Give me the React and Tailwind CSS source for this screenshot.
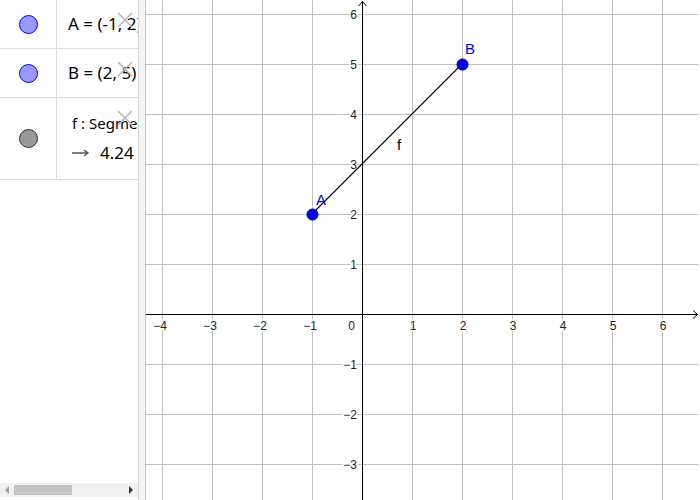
import React from 'react';

const font = { fontFamily: '"Noto Sans", "DejaVu Sans", sans-serif' };

const CloseMark = () => (
  <svg className="absolute right-[5px] top-[12px]" width="16" height="16" viewBox="0 0 16 16">
    <path d="M1 1 L15 15 M15 1 L1 15" stroke="#b8b8b8" strokeWidth="1.6" fill="none" />
  </svg>
);

const Dot = ({ fill, stroke }) => (
  <span className="block h-[19px] w-[19px] rounded-full border" style={{ backgroundColor: fill, borderColor: stroke }} />
);

const AlgebraView = () => (
  <div className="flex h-full w-[139px] flex-col border-r border-[#d4d4d4] bg-white" style={font}>
    <div className="flex h-[49px] border-b border-[#dcdcdc]">
      <div className="flex w-[57px] items-center justify-center border-r border-[#dcdcdc]">
        <Dot fill="#9999ff" stroke="#0000ff" />
      </div>
      <div className="relative flex flex-1 items-center overflow-hidden whitespace-nowrap pl-[11px] text-[17px] text-black">
        A = (-1, 2)
        <CloseMark />
      </div>
    </div>
    <div className="flex h-[49px] border-b border-[#dcdcdc]">
      <div className="flex w-[57px] items-center justify-center border-r border-[#dcdcdc]">
        <Dot fill="#9999ff" stroke="#0000ff" />
      </div>
      <div className="relative flex flex-1 items-center overflow-hidden whitespace-nowrap pl-[11px] text-[17px] text-black">
        B = (2, 5)
        <CloseMark />
      </div>
    </div>
    <div className="flex h-[82px] border-b border-[#dcdcdc]">
      <div className="flex w-[57px] items-center justify-center border-r border-[#dcdcdc]">
        <Dot fill="#999999" stroke="#333333" />
      </div>
      <div className="relative flex flex-1 flex-col justify-center gap-[10px] overflow-hidden whitespace-nowrap pl-[15px] text-black">
        <div className="text-[15px] leading-[18px]">f : Segment(A, B)</div>
        <div className="flex items-center text-[17px] leading-[22px]">
          <svg width="18" height="8" viewBox="0 0 18 8" className="mr-[10px]">
            <path d="M0 4 H15 M12 1 L16 4 L12 7" stroke="#555" strokeWidth="1.4" fill="none" />
          </svg>
          4.24
        </div>
        <CloseMark />
      </div>
    </div>
    <div className="flex-1" />
    <div className="mb-[3px] flex h-[14px] items-center bg-[#f0f0f0]">
      <svg width="14" height="14" viewBox="0 0 14 14">
        <path d="M9 3 L5 7 L9 11 Z" fill="#a0a0a0" />
      </svg>
      <div className="h-[10px] w-[58px] bg-[#c4c4c4]" />
      <div className="flex-1" />
      <svg width="14" height="14" viewBox="0 0 14 14">
        <path d="M5 3 L9 7 L5 11 Z" fill="#333" />
      </svg>
    </div>
  </div>
);

const GraphicsView = () => {
  const ox = 216;
  const oy = 314;
  const s = 50;
  const xs = [-4, -3, -2, -1, 0, 1, 2, 3, 4, 5, 6];
  const ys = [-3, -2, -1, 0, 1, 2, 3, 4, 5, 6];
  const lab = (n) => (n < 0 ? '\u2212' + Math.abs(n) : String(n));
  return (
    <svg width="553" height="500" viewBox="0 0 553 500" className="block" style={{ fontFamily: '"Liberation Sans", Arial, sans-serif' }}>
      <rect width="553" height="500" fill="white" />
      {xs.filter((k) => k !== 0).map((k) => (
        <line key={'vx' + k} x1={ox + k * s + 0.5} x2={ox + k * s + 0.5} y1="0" y2="500" stroke="#c0c0c0" />
      ))}
      {ys.filter((k) => k !== 0).map((k) => (
        <line key={'hy' + k} x1="0" x2="553" y1={oy - k * s + 0.5} y2={oy - k * s + 0.5} stroke="#c0c0c0" />
      ))}
      <line x1="0" x2="552" y1={oy + 0.5} y2={oy + 0.5} stroke="black" />
      <line x1={ox + 0.5} x2={ox + 0.5} y1="1" y2="500" stroke="black" />
      <path d={`M${ox - 3.5} 6 L${ox + 0.5} 1.5 L${ox + 4.5} 6`} stroke="black" fill="none" />
      <path d={`M547 ${oy - 3.5} L551.5 ${oy + 0.5} L547 ${oy + 4.5}`} stroke="black" fill="none" />
      {xs.filter((k) => k !== 0).map((k) => (
        <text key={'lx' + k} x={ox + k * s + (k < 0 ? -2 : 1)} y={oy + 16} fontSize="12" textAnchor="middle" fill="#222" stroke="white" strokeWidth="3" paintOrder="stroke">
          {lab(k)}
        </text>
      ))}
      <text x={ox - 7} y={oy + 16} fontSize="12" textAnchor="end" fill="#222">0</text>
      {ys.filter((k) => k !== 0).map((k) => (
        <text key={'ly' + k} x={ox - 5} y={oy - k * s + 5} fontSize="12" textAnchor="end" fill="#222" stroke="white" strokeWidth="3" paintOrder="stroke">
          {lab(k)}
        </text>
      ))}
      <line x1={ox - s} y1={oy - 2 * s} x2={ox + 2 * s} y2={oy - 5 * s} stroke="black" strokeWidth="1.1" />
      <circle cx={ox - s + 0.5} cy={oy - 2 * s + 0.5} r="5.5" fill="#0000ff" stroke="#000066" />
      <circle cx={ox + 2 * s + 0.5} cy={oy - 5 * s + 0.5} r="5.5" fill="#0000ff" stroke="#000066" />
      <text x={ox - s + 4} y={oy - 2 * s - 9} fontSize="15" fill="#0000ff">A</text>
      <text x={ox + 2 * s + 3} y={oy - 5 * s - 10} fontSize="15" fill="#0000ff">B</text>
      <text x={ox + 35} y={oy - 164} fontSize="15" fill="#000">f</text>
    </svg>
  );
};

export default function App() {
  return (
    <div className="flex h-[500px] w-[700px] overflow-hidden bg-white">
      <AlgebraView />
      <div className="h-full w-[7px] border-r border-[#c8c8c8] bg-[#f4f4f4]" />
      <GraphicsView />
    </div>
  );
}
